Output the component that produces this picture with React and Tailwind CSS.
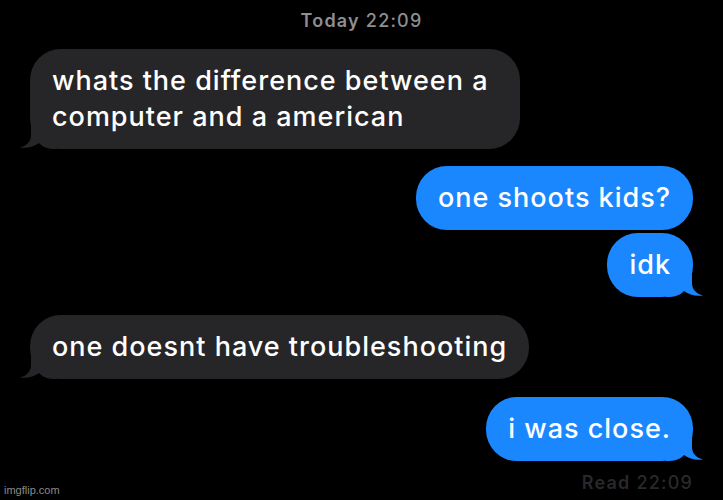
import React from "react";

const TailLeft = ({ color }) => (
  <svg
    className="absolute bottom-0 left-[-11px]"
    width="38"
    height="32"
    viewBox="-12 -32 38 32"
  >
    <path
      d="M0 -32 L0 -14 C0 -7 -5 -3 -11 -1.5 C-4 -0.5 3 -2 8 -6 C12 -2 16 0 26 0 L26 -32 Z"
      fill={color}
    />
  </svg>
);

const TailRight = ({ color }) => (
  <svg
    className="absolute bottom-0 right-[-11px]"
    width="38"
    height="32"
    viewBox="-12 -32 38 32"
    style={{ transform: "scaleX(-1)" }}
  >
    <path
      d="M0 -32 L0 -14 C0 -7 -5 -3 -11 -1.5 C-4 -0.5 3 -2 8 -6 C12 -2 16 0 26 0 L26 -32 Z"
      fill={color}
    />
  </svg>
);

const Incoming = ({ children, tail, className = "" }) => (
  <div
    className={`relative self-start rounded-[31px] bg-[#262629] px-[22px] py-[14px] text-[27px] leading-[36px] font-medium tracking-[1px] text-white ${className}`}
  >
    {tail && <TailLeft color="#262629" />}
    <span className="relative">{children}</span>
  </div>
);

const Outgoing = ({ children, tail, className = "" }) => (
  <div
    className={`relative self-end rounded-[31px] bg-[#1b87ff] px-[22px] py-[14px] text-[27px] leading-[36px] font-medium tracking-[1px] text-white ${className}`}
  >
    {tail && <TailRight color="#1b87ff" />}
    <span className="relative">{children}</span>
  </div>
);

export default function App() {
  return (
    <div className="relative h-[500px] w-[723px] overflow-hidden bg-black font-['Inter',sans-serif]">
      <div className="pt-[10px] text-center text-[18px] leading-[22px] font-medium tracking-[1.2px] text-[#8e8e93]">
        <span className="font-semibold">Today</span> 22:09
      </div>

      <div className="mt-[17px] flex flex-col px-[30px]">
        <Incoming tail className="max-w-[490px]">
          whats the difference between a computer and a american
        </Incoming>
        <Outgoing className="mt-[17px]">one shoots kids?</Outgoing>
        <Outgoing tail className="mt-[3px]">
          idk
        </Outgoing>
        <Incoming tail className="mt-[18px]">
          one doesnt have troubleshooting
        </Incoming>
        <Outgoing tail className="mt-[18px]">
          i was close.
        </Outgoing>
        <div className="mt-[11px] self-end text-[18px] leading-[22px] font-medium tracking-[1.2px] text-[#29292b]">
          <span className="font-semibold">Read</span> 22:09
        </div>
      </div>

      <div className="absolute bottom-[2px] left-[4px] font-['Liberation_Sans',sans-serif] text-[11px] text-[#8a8a8a]">
        imgflip.com
      </div>
    </div>
  );
}
